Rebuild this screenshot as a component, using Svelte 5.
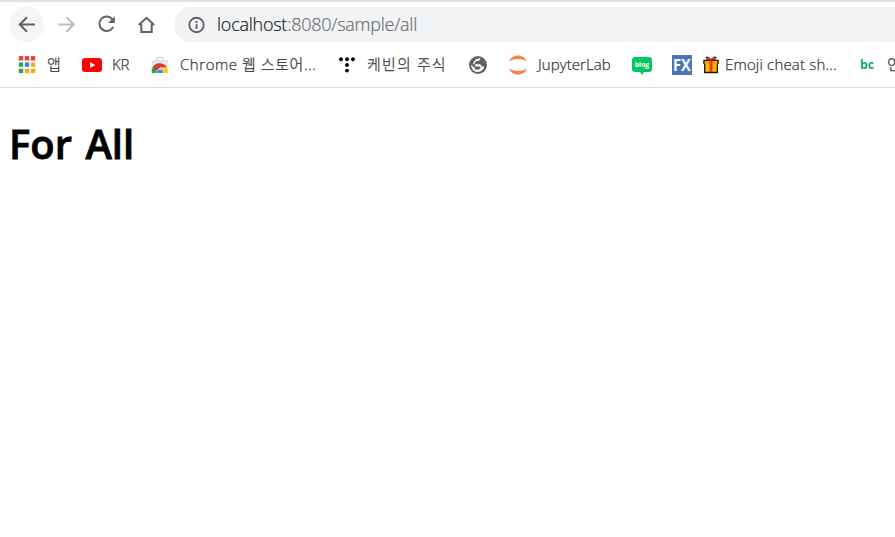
<script>
  const bookmarks = [
    { icon: 'apps', label: '앱', width: 64, lead: 29, spacing: 0 },
    { icon: 'youtube', label: 'KR', width: 69, lead: 30, spacing: -0.2 },
    { icon: 'store', label: 'Chrome 웹 스토어...', width: 188, lead: 29, spacing: 0.55 },
    { icon: 'tistory', label: '케빈의 주식', width: 130, lead: 28, spacing: 1.15 },
    { icon: 'globe', label: '', width: 39, lead: 18, spacing: 0 },
    { icon: 'jupyter', label: 'JupyterLab', width: 124, lead: 30, spacing: 0.08 },
    { icon: 'blog', label: '', width: 40, lead: 20, spacing: 0 },
    { icon: 'fx', label: '', width: 31, lead: 20, spacing: 0 },
    { icon: 'gift', label: 'Emoji cheat sh...', width: 157, lead: 22, spacing: 0.18 },
    { icon: 'bc', label: '인', width: 50, lead: 27, spacing: 0 }
  ];
  const appColors = ['#ea4335', '#ea4335', '#ea4335', '#34a060', '#2f86ee', '#fba816', '#34a060', '#fba816', '#fba816'];
  const dots = [[2, 4.3], [8, 4.3], [14, 4.3], [8, 10], [8, 15.6]];
</script>

<div class="window">
  <header>
    <nav class="toolbar">
      <button class="back" aria-label="Back">
        <svg width="20" height="20" viewBox="0 0 20 20"><path d="M18 9.5H3M10 2.3 2.8 9.5l7.2 7.2" /></svg>
      </button>
      <button class="forward" aria-label="Forward">
        <svg width="20" height="20" viewBox="0 0 20 20"><path d="M1.5 9.5h15M9.5 2.3l7.2 7.2-7.2 7.2" /></svg>
      </button>
      <button class="reload" aria-label="Reload">
        <svg width="20" height="20" viewBox="0 0 20 20"><path d="M15.6 4.7A7.2 7.2 0 1 0 16.2 11.8" /><path class="solid" d="M17.8 1.3v6.8H11z" /></svg>
      </button>
      <button class="home" aria-label="Home">
        <svg width="20" height="20" viewBox="0 0 20 20"><path d="M1.8 10.1 9.5 2.8l7.7 7.3M4.3 9v7.9h10.4V9" /></svg>
      </button>
      <div class="address">
        <svg width="18" height="18" viewBox="0 0 18 18"><circle cx="8.5" cy="9" r="7.2" /><path d="M8.5 8.2v4.7M8.5 5v2" /></svg>
        <span class="url">localhost<span>:8080/sample/all</span></span>
      </div>
    </nav>
    <nav class="bookmarks">
      {#each bookmarks as b}
        <div class="bookmark" style:width="{b.width}px">
          <span class="icon" style:width="{b.lead}px">
            {#if b.icon === 'apps'}
              <svg width="18" height="20" viewBox="0 0 18 20">
                {#each appColors as color, i}
                  <rect x={0.8 + (i % 3) * 6} y={1.1 + Math.floor(i / 3) * 6.3} width="4.4" height="4.4" fill={color} />
                {/each}
              </svg>
            {:else if b.icon === 'youtube'}
              <svg width="20" height="20" viewBox="0 0 20 20"><rect y="3" width="20" height="14" rx="3" fill="#f00" /><path d="m8 7.1 5.2 2.9L8 12.9z" fill="#fff" /></svg>
            {:else if b.icon === 'store'}
              <svg width="18" height="20" viewBox="0 0 18 20">
                <path d="M6 5.5V3.7Q6 2.5 7 2.5h4q1 0 1 1.2v1.8" fill="none" stroke="#d4d6d7" stroke-width="1.3" />
                <path d="M1 5.2h16l.8 12.8H.2z" fill="#e7e8e9" />
                <path d="M1 5.2h16l.1 1.2H.9z" fill="#dcdedf" />
                <path d="M1.6 12.3A8.2 8.2 0 0 1 16 12.6H9L6 16z" fill="#dc3a30" />
                <path d="M1.8 12A8 8 0 0 0 1 18h6l-1-3z" fill="#2f9e4b" />
                <path d="M9 12.6h7a8 8 0 0 1 1 5.4h-6z" fill="#fdc91b" />
                <path d="M5 18a4 4 0 0 1 8 0z" fill="#e8effb" />
                <path d="M5.6 18a3.4 3.4 0 0 1 6.8 0z" fill="#4688e8" />
              </svg>
            {:else if b.icon === 'tistory'}
              <svg width="16" height="20" viewBox="0 0 16 20">
                {#each dots as [x, y]}<circle cx={x} cy={y} r="1.95" fill="#000" />{/each}
              </svg>
            {:else if b.icon === 'globe'}
              <svg width="18" height="20" viewBox="0 0 18 20">
                <circle cx="9" cy="10" r="9" fill="#5f6368" />
                <path d="M11.5 3.2Q11 5.7 8.7 5.9H7.4L5.7 7.7V9.2h5.2q1.7.3 1.7 2.2h2.6q-.5 3-3.1 4.5-1.5 1-4.2 1.1v-2.3h1.8l1.7-1.8v-1.4H6.2V9.2H4.1A6.8 6.8 0 0 1 11.5 3.2z" fill="#fff" />
                <path d="M2 9.8 5.8 13v1.4H8V17A7 7 0 0 1 2 9.8z" fill="#fff" />
              </svg>
            {:else if b.icon === 'jupyter'}
              <svg width="20" height="20" viewBox="0 0 20 20"><path d="M.8 6.8C4.2-1.7 15.8-1.7 19.2 6.8 14.8 3.2 5.2 3.2.8 6.8zM.8 13.2C4.2 21.7 15.8 21.7 19.2 13.2 14.8 16.8 5.2 16.8.8 13.2z" fill="#f58345" /></svg>
            {:else if b.icon === 'blog'}
              <svg width="20" height="20" viewBox="0 0 20 20">
                <path d="M3 2h14q3 0 3 3v9q0 3-3 3h-5l-2 3-2-3H3q-3 0-3-3V5q0-3 3-3z" fill="#03c75a" />
                <text x="10" y="11.8" text-anchor="middle" textLength="14.4" lengthAdjust="spacingAndGlyphs" class="blogtext">blog</text>
              </svg>
            {:else if b.icon === 'fx'}
              <svg width="20" height="20" viewBox="0 0 20 20"><rect width="20" height="20" fill="#4a73b8" /><text x="1" y="15.8" textLength="17.8" lengthAdjust="spacingAndGlyphs" class="fxtext">FX</text></svg>
            {:else if b.icon === 'gift'}
              <svg width="16" height="20" viewBox="0 0 16 20">
                <path d="M1.7 8.2h12.6v9.3H1.7zM.9 5.3h14.2v3H.9z" fill="#ffb700" stroke="#151515" stroke-width="1.3" />
                <path d="M1.6 7.3h12.8v1.8H1.6z" fill="#f9a800" />
                <path d="M6.5 5h3v12h-3z" fill="#f03a17" />
                <path d="M8 5.2Q2.7 5 2.8 2.2 4.7.6 8 4.4q3.3-3.8 5.2-2.2Q13.3 5 8 5.2z" fill="#f03a17" stroke="#3a1710" stroke-width=".7" />
              </svg>
            {:else}
              <svg width="15" height="20" viewBox="0 0 15 20"><text x="0" y="14.3" textLength="14" lengthAdjust="spacingAndGlyphs" class="bctext">bc</text></svg>
            {/if}
          </span>
          {#if b.label}<span class="label" style:letter-spacing="{b.spacing}px">{b.label}</span>{/if}
        </div>
      {/each}
    </nav>
  </header>
  <main><h1>For All</h1></main>
</div>

<style>
  :global(body) { background: #fff; }
  .window { width: 895px; height: 537px; overflow: hidden; background: #fff; font-family: "Open Sans", "Noto Sans CJK KR", sans-serif; }
  header { height: 88px; box-sizing: border-box; border-top: 2px solid #dee1e6; border-bottom: 1px solid #dadce0; overflow: hidden; }
  .toolbar { display: flex; height: 45px; padding: 5px 0 0 9px; box-sizing: border-box; align-items: flex-start; }
  button { width: 35px; height: 35px; margin: 0 5px 0 0; padding: 0; border: 0; border-radius: 50%; background: none; display: grid; place-items: center; flex: none; }
  .back { background: #f5f5f6; }
  button svg { fill: none; stroke: #5f6368; stroke-width: 2; }
  .forward svg { stroke: #babcbe; }
  button .solid { fill: #5f6368; stroke: none; }
  .home { margin-right: 10px; }
  .address { flex: 1; height: 35px; box-sizing: border-box; padding-left: 14px; border-radius: 18px 0 0 18px; background: #f1f3f4; display: flex; align-items: center; gap: 11px; }
  .address svg { fill: none; stroke: #5f6368; stroke-width: 1.9; }
  .url { font: 300 18px/35px "Open Sans", "Noto Sans", sans-serif; color: #202124; white-space: nowrap; letter-spacing: -.25px; -webkit-text-stroke: .2px currentColor; }
  .url span { color: #6b6f74; }
  .bookmarks { display: flex; height: 36px; padding-left: 18px; align-items: center; }
  .bookmark { display: flex; align-items: center; flex: none; height: 36px; }
  .icon { display: flex; flex: none; }
  .label { white-space: nowrap; font: 300 15px/24px "Open Sans", "Noto Sans CJK KR", sans-serif; color: #34373b; padding-bottom: 2px; -webkit-text-stroke: .25px currentColor; }
  .blogtext { font: 700 7.6px "Open Sans", sans-serif; fill: #fff; }
  .fxtext { font: 700 16px "Open Sans", sans-serif; fill: #fff; }
  .bctext { font: 700 13px "Open Sans", sans-serif; fill: #12a36d; }
  main { padding: 0 9px; }
  h1 { margin: 28px 0 0; font: 600 40px/56px "Open Sans", sans-serif; color: #000; white-space: nowrap; letter-spacing: 0; word-spacing: 3px; -webkit-text-stroke: .8px #000; }
</style>
